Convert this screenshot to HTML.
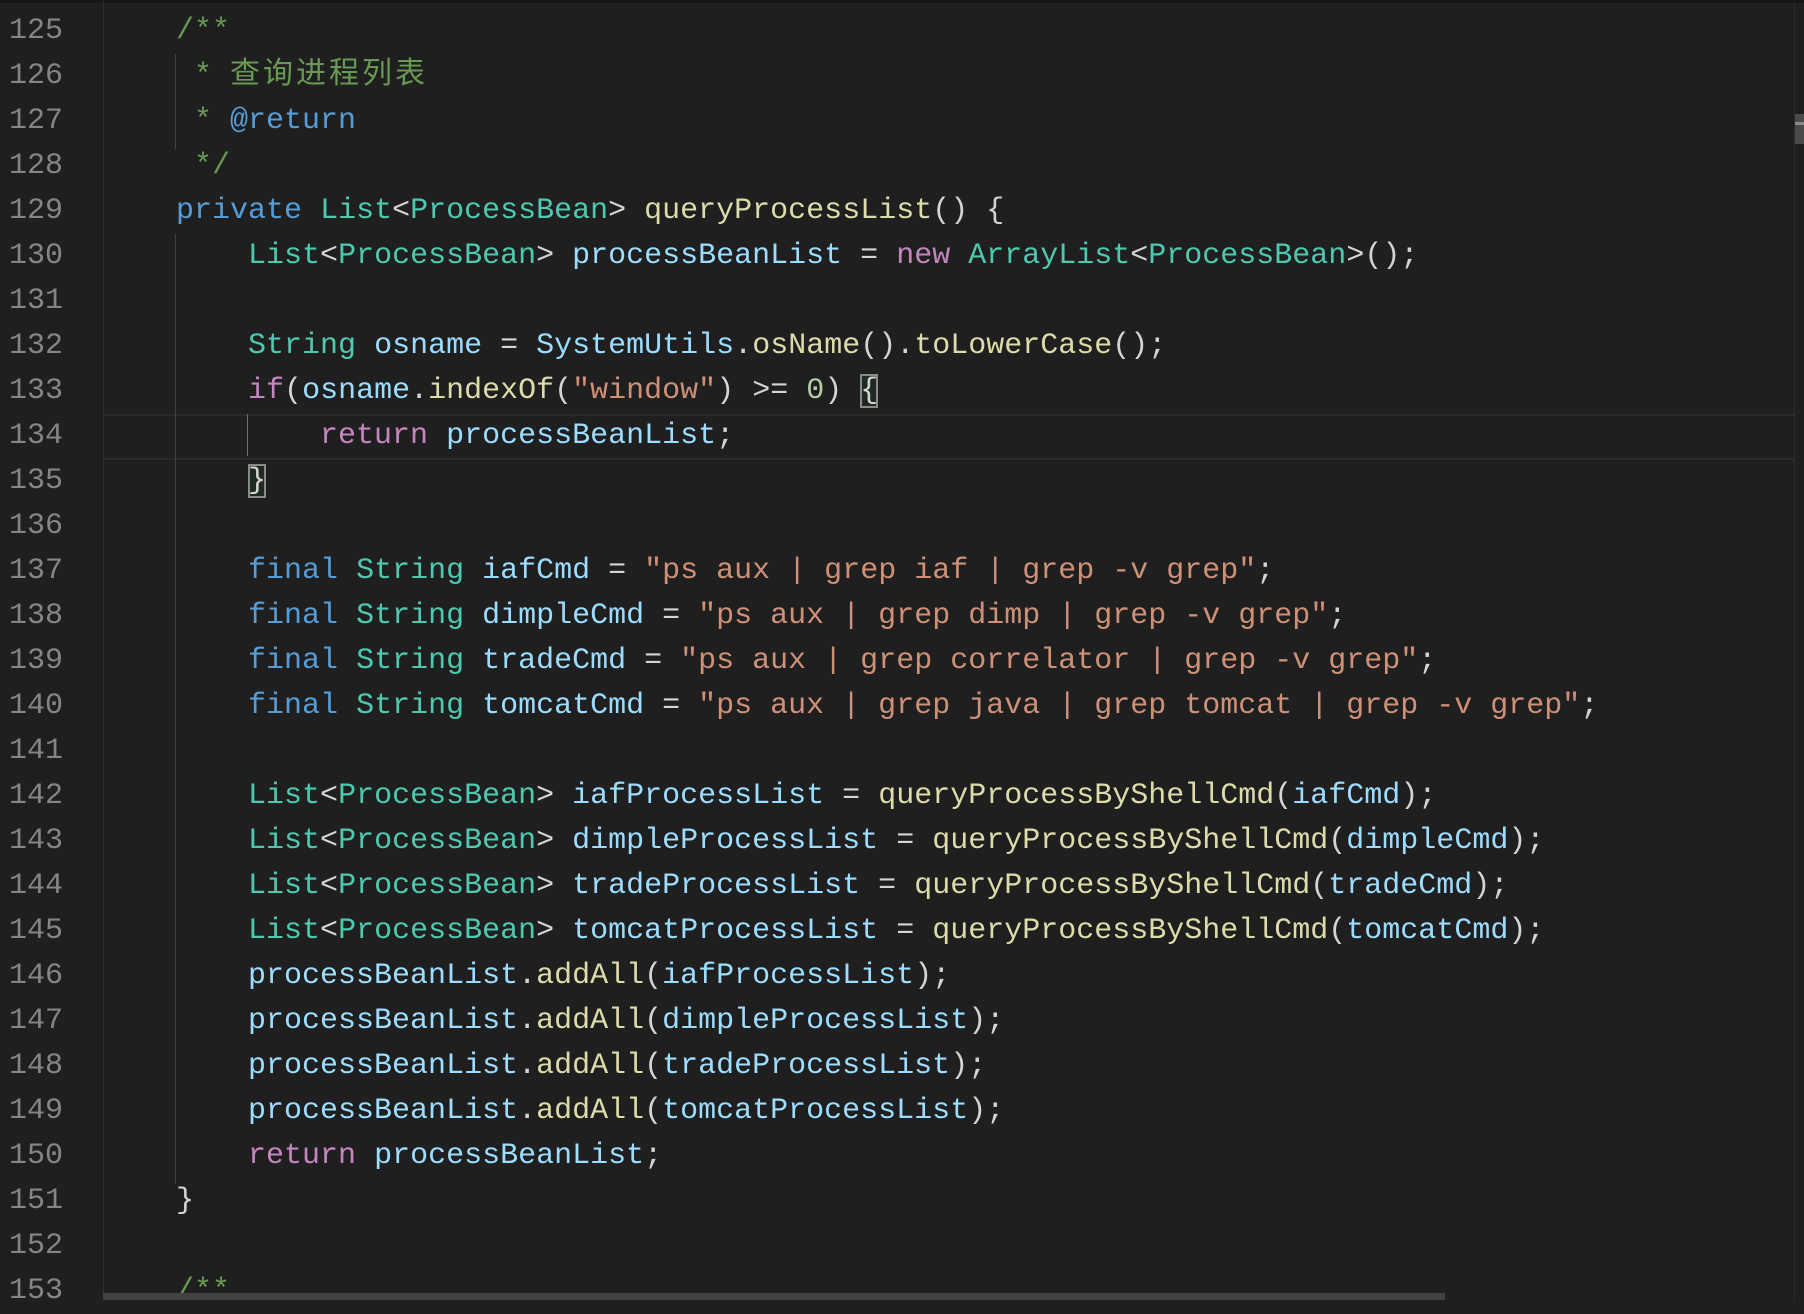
<!DOCTYPE html>
<html><head><meta charset="utf-8"><style>
html,body{margin:0;padding:0}
body{width:1804px;height:1300px;background:#1f1f1f;overflow:hidden;position:relative;font-family:"Liberation Mono","Noto Sans CJK SC",monospace;font-size:30px}
.top{position:absolute;left:0;top:0;width:1804px;height:3px;background:#161616}
.gut{position:absolute;left:103px;top:0;width:1px;height:1300px;background:#2e2e2e}
.w{position:absolute;left:0;top:4px;width:1804px;height:1300px}
.ln{position:absolute;left:0;width:63px;text-align:right;color:#858585;height:45px;line-height:45px;white-space:pre}
.cl{position:absolute;left:104px;width:1690px;white-space:pre;height:45px;line-height:45px;color:#d4d4d4}
.cur{position:absolute;left:104px;top:410px;width:1690px;height:42px;border-top:2px solid #2a2a2a;border-bottom:2px solid #2a2a2a}
.g{position:absolute;width:1px;background:#404040}
.c{color:#6a9955}.k{color:#569cd6}.t{color:#4ec9b0}.v{color:#9cdcfe}.f{color:#dcdcaa}.s{color:#ce9178}.p{color:#c586c0}.n{color:#b5cea8}
.cj{letter-spacing:3px}
.bb{outline:2px solid #8a8a8a;outline-offset:-2px;background:#1e2a22}
.hs{position:absolute;left:103px;top:1293px;width:1342px;height:7px;background:#424242}
.vb{position:absolute;left:1794px;top:3px;width:1px;height:1297px;background:#2b2b2b}
.vt{position:absolute;left:1795px;top:114px;width:9px;height:30px;background:#4a4a4a}
.vm{position:absolute;left:1795px;top:122px;width:9px;height:3px;background:#8a8a8a}
</style></head><body>
<div class="top"></div>
<div class="gut"></div>
<div class="w">
<div class="cur"></div>
<div class="g" style="left:175px;top:50px;height:95px"></div>
<div class="g" style="left:175px;top:230px;height:950px"></div>
<div class="g" style="left:247px;top:410px;height:42px;background:#707070"></div>

<div class="ln" style="top:5px">125</div><div class="cl" style="top:5px">    <span class="c">/**</span></div>
<div class="ln" style="top:50px">126</div><div class="cl" style="top:50px">    <span class="c"> * <span class="cj">查询进程列表</span></span></div>
<div class="ln" style="top:95px">127</div><div class="cl" style="top:95px">    <span class="c"> * </span><span class="k">@return</span></div>
<div class="ln" style="top:140px">128</div><div class="cl" style="top:140px">    <span class="c"> */</span></div>
<div class="ln" style="top:185px">129</div><div class="cl" style="top:185px">    <span class="k">private</span> <span class="t">List</span>&lt;<span class="t">ProcessBean</span>&gt; <span class="f">queryProcessList</span>() {</div>
<div class="ln" style="top:230px">130</div><div class="cl" style="top:230px">        <span class="t">List</span>&lt;<span class="t">ProcessBean</span>&gt; <span class="v">processBeanList</span> = <span class="p">new</span> <span class="t">ArrayList</span>&lt;<span class="t">ProcessBean</span>&gt;();</div>
<div class="ln" style="top:275px">131</div>
<div class="ln" style="top:320px">132</div><div class="cl" style="top:320px">        <span class="t">String</span> <span class="v">osname</span> = <span class="v">SystemUtils</span>.<span class="f">osName</span>().<span class="f">toLowerCase</span>();</div>
<div class="ln" style="top:365px">133</div><div class="cl" style="top:365px">        <span class="p">if</span>(<span class="v">osname</span>.<span class="f">indexOf</span>(<span class="s">"window"</span>) &gt;= <span class="n">0</span>) <span class="bb">{</span></div>
<div class="ln" style="top:410px">134</div><div class="cl" style="top:410px">            <span class="p">return</span> <span class="v">processBeanList</span>;</div>
<div class="ln" style="top:455px">135</div><div class="cl" style="top:455px">        <span class="bb">}</span></div>
<div class="ln" style="top:500px">136</div>
<div class="ln" style="top:545px">137</div><div class="cl" style="top:545px">        <span class="k">final</span> <span class="t">String</span> <span class="v">iafCmd</span> = <span class="s">"ps aux | grep iaf | grep -v grep"</span>;</div>
<div class="ln" style="top:590px">138</div><div class="cl" style="top:590px">        <span class="k">final</span> <span class="t">String</span> <span class="v">dimpleCmd</span> = <span class="s">"ps aux | grep dimp | grep -v grep"</span>;</div>
<div class="ln" style="top:635px">139</div><div class="cl" style="top:635px">        <span class="k">final</span> <span class="t">String</span> <span class="v">tradeCmd</span> = <span class="s">"ps aux | grep correlator | grep -v grep"</span>;</div>
<div class="ln" style="top:680px">140</div><div class="cl" style="top:680px">        <span class="k">final</span> <span class="t">String</span> <span class="v">tomcatCmd</span> = <span class="s">"ps aux | grep java | grep tomcat | grep -v grep"</span>;</div>
<div class="ln" style="top:725px">141</div>
<div class="ln" style="top:770px">142</div><div class="cl" style="top:770px">        <span class="t">List</span>&lt;<span class="t">ProcessBean</span>&gt; <span class="v">iafProcessList</span> = <span class="f">queryProcessByShellCmd</span>(<span class="v">iafCmd</span>);</div>
<div class="ln" style="top:815px">143</div><div class="cl" style="top:815px">        <span class="t">List</span>&lt;<span class="t">ProcessBean</span>&gt; <span class="v">dimpleProcessList</span> = <span class="f">queryProcessByShellCmd</span>(<span class="v">dimpleCmd</span>);</div>
<div class="ln" style="top:860px">144</div><div class="cl" style="top:860px">        <span class="t">List</span>&lt;<span class="t">ProcessBean</span>&gt; <span class="v">tradeProcessList</span> = <span class="f">queryProcessByShellCmd</span>(<span class="v">tradeCmd</span>);</div>
<div class="ln" style="top:905px">145</div><div class="cl" style="top:905px">        <span class="t">List</span>&lt;<span class="t">ProcessBean</span>&gt; <span class="v">tomcatProcessList</span> = <span class="f">queryProcessByShellCmd</span>(<span class="v">tomcatCmd</span>);</div>
<div class="ln" style="top:950px">146</div><div class="cl" style="top:950px">        <span class="v">processBeanList</span>.<span class="f">addAll</span>(<span class="v">iafProcessList</span>);</div>
<div class="ln" style="top:995px">147</div><div class="cl" style="top:995px">        <span class="v">processBeanList</span>.<span class="f">addAll</span>(<span class="v">dimpleProcessList</span>);</div>
<div class="ln" style="top:1040px">148</div><div class="cl" style="top:1040px">        <span class="v">processBeanList</span>.<span class="f">addAll</span>(<span class="v">tradeProcessList</span>);</div>
<div class="ln" style="top:1085px">149</div><div class="cl" style="top:1085px">        <span class="v">processBeanList</span>.<span class="f">addAll</span>(<span class="v">tomcatProcessList</span>);</div>
<div class="ln" style="top:1130px">150</div><div class="cl" style="top:1130px">        <span class="p">return</span> <span class="v">processBeanList</span>;</div>
<div class="ln" style="top:1175px">151</div><div class="cl" style="top:1175px">    }</div>
<div class="ln" style="top:1220px">152</div>
<div class="ln" style="top:1265px">153</div><div class="cl" style="top:1265px">    <span class="c">/**</span></div>
</div>
<div class="vb"></div><div class="vt"></div><div class="vm"></div>
<div class="hs"></div>
</body></html>
